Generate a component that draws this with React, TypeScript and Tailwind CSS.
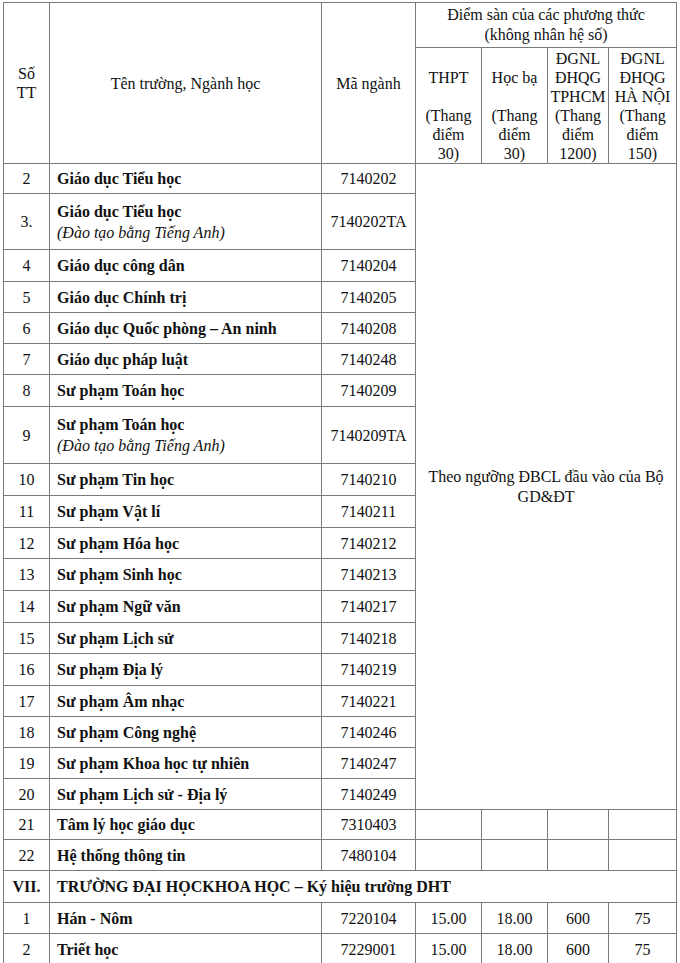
import React from "react";

type Row = {
  stt: string;
  name: string;
  note?: string;
  code: string;
  h: number;
  scores?: string[];
  empty?: boolean;
};

const group1: Row[] = [
  { stt: "2", name: "Giáo dục Tiểu học", code: "7140202", h: 30 },
  { stt: "3.", name: "Giáo dục Tiểu học", note: "(Đào tạo bằng Tiếng Anh)", code: "7140202TA", h: 56 },
  { stt: "4", name: "Giáo dục công dân", code: "7140204", h: 32 },
  { stt: "5", name: "Giáo dục Chính trị", code: "7140205", h: 31 },
  { stt: "6", name: "Giáo dục Quốc phòng – An ninh", code: "7140208", h: 31 },
  { stt: "7", name: "Giáo dục pháp luật", code: "7140248", h: 31 },
  { stt: "8", name: "Sư phạm Toán học", code: "7140209", h: 32 },
  { stt: "9", name: "Sư phạm Toán học", note: "(Đào tạo bằng Tiếng Anh)", code: "7140209TA", h: 57 },
  { stt: "10", name: "Sư phạm Tin học", code: "7140210", h: 32 },
  { stt: "11", name: "Sư phạm Vật lí", code: "7140211", h: 32 },
  { stt: "12", name: "Sư phạm Hóa học", code: "7140212", h: 31 },
  { stt: "13", name: "Sư phạm Sinh học", code: "7140213", h: 32 },
  { stt: "14", name: "Sư phạm Ngữ văn", code: "7140217", h: 32 },
  { stt: "15", name: "Sư phạm Lịch sử", code: "7140218", h: 31 },
  { stt: "16", name: "Sư phạm Địa lý", code: "7140219", h: 32 },
  { stt: "17", name: "Sư phạm Âm nhạc", code: "7140221", h: 31 },
  { stt: "18", name: "Sư phạm Công nghệ", code: "7140246", h: 31 },
  { stt: "19", name: "Sư phạm Khoa học tự nhiên", code: "7140247", h: 31 },
  { stt: "20", name: "Sư phạm Lịch sử - Địa lý", code: "7140249", h: 31 },
];

const group2: Row[] = [
  { stt: "21", name: "Tâm lý học giáo dục", code: "7310403", h: 30, empty: true },
  { stt: "22", name: "Hệ thống thông tin", code: "7480104", h: 31, empty: true },
];

const group3: Row[] = [
  { stt: "1", name: "Hán - Nôm", code: "7220104", h: 31, scores: ["15.00", "18.00", "600", "75"] },
  { stt: "2", name: "Triết học", code: "7229001", h: 31, scores: ["15.00", "18.00", "600", "75"] },
];

const cell = "border border-[#7a7a7a] align-middle";

function NameCell({ row }: { row: Row }) {
  return (
    <td className={`${cell} pl-[7px] pr-1 text-left`}>
      <div className="font-bold">{row.name}</div>
      {row.note && <div className="italic">{row.note}</div>}
    </td>
  );
}

export default function App() {
  return (
    <div className="bg-white pt-[2px] pl-[3px] text-[#111] font-['Liberation_Serif','Times_New_Roman',serif] text-[16px]">
      <table className="table-fixed border-collapse w-[673px] leading-[21px]">
        <colgroup>
          <col className="w-[46px]" />
          <col className="w-[272px]" />
          <col className="w-[94px]" />
          <col className="w-[66px]" />
          <col className="w-[66px]" />
          <col className="w-[61px]" />
          <col className="w-[68px]" />
        </colgroup>
        <thead className="leading-[19px] text-center">
          <tr className="h-[45px]">
            <td rowSpan={2} className={cell}>
              Số
              <br />
              TT
            </td>
            <td rowSpan={2} className={cell}>
              Tên trường, Ngành học
            </td>
            <td rowSpan={2} className={cell}>
              Mã ngành
            </td>
            <td colSpan={4} className={`${cell} leading-[20px]`}>
              Điểm sàn của các phương thức
              <br />
              (không nhân hệ số)
            </td>
          </tr>
          <tr className="h-[116px]">
            <td className={`${cell} px-0`}>
              <br />
              THPT
              <br />
              <br />
              (Thang
              <br />
              điểm
              <br />
              30)
            </td>
            <td className={`${cell} px-0`}>
              <br />
              Học bạ
              <br />
              <br />
              (Thang
              <br />
              điểm
              <br />
              30)
            </td>
            <td className={`${cell} px-0`}>
              ĐGNL
              <br />
              ĐHQG
              <br />
              TPHCM
              <br />
              (Thang
              <br />
              điểm
              <br />
              1200)
            </td>
            <td className={`${cell} px-0`}>
              ĐGNL
              <br />
              ĐHQG
              <br />
              HÀ NỘI
              <br />
              (Thang
              <br />
              điểm
              <br />
              150)
            </td>
          </tr>
        </thead>
        <tbody>
          {group1.map((row, i) => (
            <tr key={"a" + i} style={{ height: row.h }}>
              <td className={`${cell} text-center`}>{row.stt}</td>
              <NameCell row={row} />
              <td className={`${cell} text-center`}>{row.code}</td>
              {i === 0 && (
                <td rowSpan={group1.length} colSpan={4} className={`${cell} text-center px-[6px] leading-[20px]`}>
                  Theo ngưỡng ĐBCL đầu vào của Bộ GD&amp;ĐT
                </td>
              )}
            </tr>
          ))}
          {group2.map((row, i) => (
            <tr key={"b" + i} style={{ height: row.h }}>
              <td className={`${cell} text-center`}>{row.stt}</td>
              <NameCell row={row} />
              <td className={`${cell} text-center`}>{row.code}</td>
              <td className={cell}></td>
              <td className={cell}></td>
              <td className={cell}></td>
              <td className={cell}></td>
            </tr>
          ))}
          <tr className="h-[32px]">
            <td className={`${cell} text-center font-bold`}>VII.</td>
            <td colSpan={6} className={`${cell} pl-[7px] text-left font-bold`}>
              TRƯỜNG ĐẠI HỌCKHOA HỌC – Ký hiệu trường DHT
            </td>
          </tr>
          {group3.map((row, i) => (
            <tr key={"c" + i} style={{ height: row.h }}>
              <td className={`${cell} text-center`}>{row.stt}</td>
              <NameCell row={row} />
              <td className={`${cell} text-center`}>{row.code}</td>
              {row.scores!.map((s, j) => (
                <td key={j} className={`${cell} text-center`}>
                  {s}
                </td>
              ))}
            </tr>
          ))}
        </tbody>
      </table>
    </div>
  );
}
